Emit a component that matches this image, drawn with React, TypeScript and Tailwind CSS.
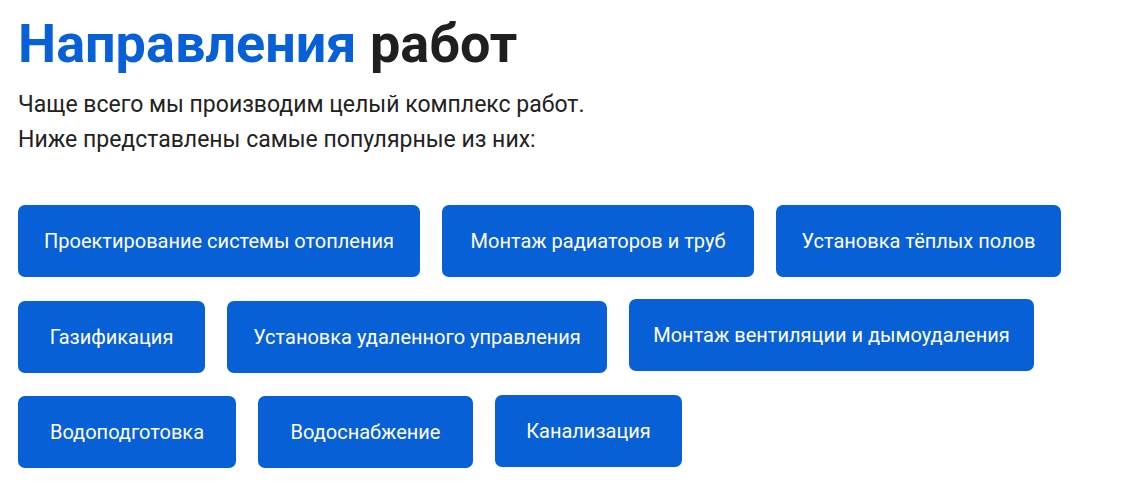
const services = [
  { title: 'Проектирование системы отопления', size: 'w-[402px]' },
  { title: 'Монтаж радиаторов и труб', size: 'w-[312px]' },
  { title: 'Установка тёплых полов', size: 'w-[285px]' },
  { title: 'Газификация', size: 'w-[187px]' },
  { title: 'Установка удаленного управления', size: 'w-[380px]' },
  { title: 'Монтаж вентиляции и дымоудаления', size: 'w-[405px] -translate-y-[2px]' },
  { title: 'Водоподготовка', size: 'w-[218px]' },
  { title: 'Водоснабжение', size: 'w-[215px]' },
  { title: 'Канализация', size: 'w-[187px] -translate-y-px' },
];

export default function App() {
  return (
    <section className="min-h-screen bg-white px-[18px] pt-[12px] font-['Roboto',sans-serif] text-[#1f1f1f]">
      <h2 className="text-[54px] font-bold leading-[64px]">
        <span className="text-[#0760d6]">Направления</span> работ
      </h2>
      <p className="mt-[11px] text-[23px] leading-[35px] text-[#222]">
        Чаще всего мы производим целый комплекс работ.
        <br />
        Ниже представлены самые популярные из них:
      </p>

      <div className="mt-[48px] flex flex-wrap gap-x-[22px] gap-y-[23.5px]">
        {services.map((service) => (
          <button
            key={service.title}
            type="button"
            className={`h-[72px] rounded-[7px] bg-[#0760d6] text-[20px] text-white ${service.size}`}
          >
            {service.title}
          </button>
        ))}
      </div>
    </section>
  );
}
